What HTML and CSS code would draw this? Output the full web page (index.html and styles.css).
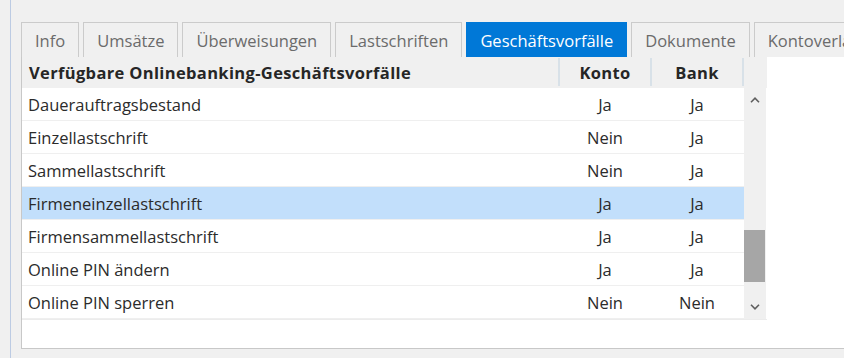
FILE: index.html
```html
<!DOCTYPE html>
<html>
<head>
  <meta charset="UTF-8">
  <title>Geschäftsvorfälle</title>
  <link rel="stylesheet" href="styles.css">
</head>
<body>
  <div class="shell">
    <div class="rail"></div>
    <div class="main">
      <div class="tabs">
        <div class="tab">Info</div>
        <div class="tab">Umsätze</div>
        <div class="tab">Überweisungen</div>
        <div class="tab">Lastschriften</div>
        <div class="tab active">Geschäftsvorfälle</div>
        <div class="tab">Dokumente</div>
        <div class="tab">Kontoverlauf</div>
      </div>

      <div class="panel">
        <div class="grid">
          <div class="grid-header">
            <div class="hcell name">Verfügbare Onlinebanking-Geschäftsvorfälle</div>
            <div class="hcell col">Konto</div>
            <div class="hcell col">Bank</div>
            <div class="hcell filler"></div>
          </div>

          <div class="grid-body">
            <div class="rows">
              <div class="row"><span class="name">Dauerauftragsbestand</span><span class="col">Ja</span><span class="col">Ja</span></div>
              <div class="row"><span class="name">Einzellastschrift</span><span class="col">Nein</span><span class="col">Ja</span></div>
              <div class="row"><span class="name">Sammellastschrift</span><span class="col">Nein</span><span class="col">Ja</span></div>
              <div class="row selected"><span class="name">Firmeneinzellastschrift</span><span class="col">Ja</span><span class="col">Ja</span></div>
              <div class="row"><span class="name">Firmensammellastschrift</span><span class="col">Ja</span><span class="col">Ja</span></div>
              <div class="row"><span class="name">Online PIN ändern</span><span class="col">Ja</span><span class="col">Ja</span></div>
              <div class="row"><span class="name">Online PIN sperren</span><span class="col">Nein</span><span class="col">Nein</span></div>
            </div>

            <!-- vertical scrollbar -->
            <div class="scrollbar">
              <div class="scroll-btn">
                <svg width="10" height="6" viewBox="0 0 10 6"><polyline points="1,5.2 5,1.2 9,5.2" fill="none" stroke="#5f5f5f" stroke-width="1.6"/></svg>
              </div>
              <div class="track">
                <div class="thumb"></div>
              </div>
              <div class="scroll-btn">
                <svg width="10" height="6" viewBox="0 0 10 6"><polyline points="1,0.8 5,4.8 9,0.8" fill="none" stroke="#5f5f5f" stroke-width="1.6"/></svg>
              </div>
            </div>
          </div>
        </div>
      </div>
    </div>
  </div>
</body>
</html>
```

FILE: styles.css
```css
* {
  box-sizing: border-box;
}

html, body {
  height: 100%;
}

body {
  margin: 0;
  background-color: #f0f0f0;
  font-family: "Open Sans", "Noto Sans", sans-serif;
  font-size: 16.5px;
  color: #2b2b2b;
  overflow: hidden;
}

.shell {
  display: flex;
  height: 100%;
}

.rail {
  width: 11px;
  flex-shrink: 0;
  border-right: 1px solid #bccbe3;
}

.main {
  flex: 1;
  padding: 22px 0 0 10px;
  min-width: 0;
}

/* tab strip */
.tabs {
  display: flex;
  gap: 4px;
  height: 35px;
  white-space: nowrap;
}

.tab {
  display: flex;
  align-items: center;
  padding: 1px 13px 0;
  border: 1px solid #cbcbcb;
  border-bottom: none;
  background-color: #f0f0f0;
  color: #6b6b6b;
  flex-shrink: 0;
}

.tab.active {
  background-color: #0078d7;
  border-color: #0078d7;
  color: #fff;
}

/* content panel */
.panel {
  height: 292px;
  background-color: #fff;
  border-left: 1px solid #c8c8c8;
  border-bottom: 1px solid #c8c8c8;
}

.grid {
  width: 745px;
}

.grid-header {
  display: grid;
  grid-template-columns: 536px 92px 92px 25px;
  height: 31px;
  background-color: #f0f0f0;
  font-weight: bold;
  letter-spacing: 0.35px;
  color: #262626;
}

.hcell {
  display: flex;
  align-items: center;
}

.hcell.name {
  padding-left: 7px;
}

.hcell.col,
.hcell.filler {
  justify-content: center;
  border-left: 2px solid #d8e1e8;
  margin: 1px 0 2px;
}

.grid-body {
  display: flex;
  border-bottom: 1px solid #ececec;
}

.rows {
  width: 722px;
}

.row {
  display: grid;
  grid-template-columns: 536px 92px 92px;
  height: 33px;
  align-items: center;
  border-bottom: 1px solid #efefef;
}

.row.selected {
  background-color: #c2dffb;
}

.row .name {
  padding-left: 6px;
}

.row .col {
  text-align: center;
  padding-left: 2px;
}

/* scrollbar */
.scrollbar {
  width: 22px;
  display: flex;
  flex-direction: column;
  background-color: #f0f0f0;
}

.scroll-btn {
  height: 24px;
  display: flex;
  align-items: center;
  justify-content: center;
}

.track {
  flex: 1;
}

.thumb {
  margin-top: 118px;
  height: 52px;
  width: 21px;
  background-color: #a6a6a6;
}
```
